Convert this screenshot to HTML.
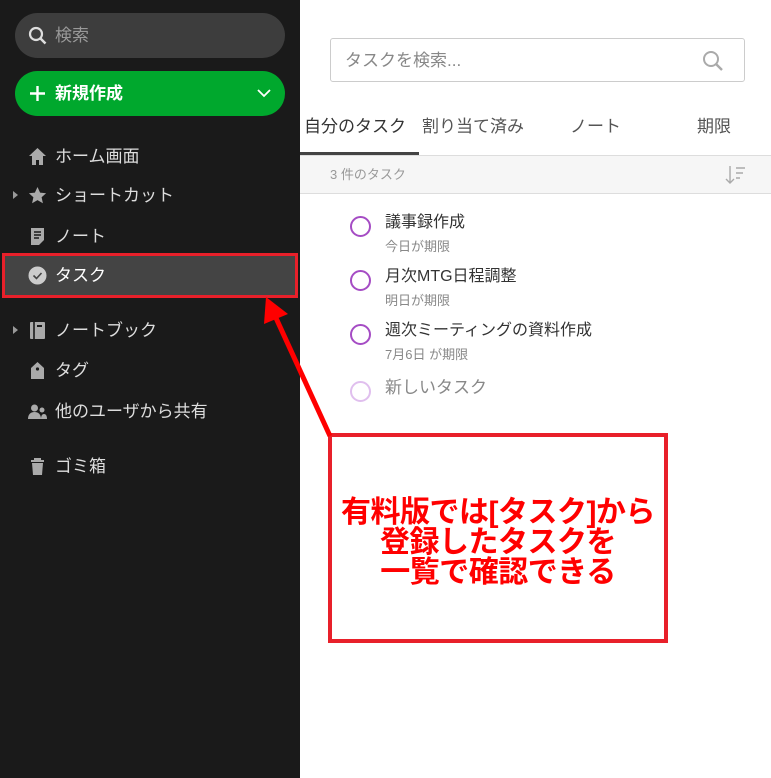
<!DOCTYPE html>
<html><head><meta charset="utf-8"><style>
*{margin:0;padding:0;box-sizing:border-box}
body{width:771px;height:778px;overflow:hidden;background:#fff;font-family:"Liberation Sans","Noto Sans CJK JP",sans-serif;position:relative}
.sb{position:absolute;left:0;top:0;width:300px;height:778px;background:#1a1a1a}
.search{position:absolute;left:15px;top:13px;width:270px;height:45px;border-radius:23px;background:#3d3d3d;color:#999;font-size:17px;line-height:45px;padding-left:40px}
.new{position:absolute;left:15px;top:71px;width:270px;height:45px;border-radius:23px;background:#00a82d;color:#fff;font-size:17px;font-weight:bold;line-height:45px;padding-left:40px}
.item{position:absolute;left:0;width:300px;height:40px;color:#ddd;font-size:17px;line-height:42px;padding-left:55px}
.ic{position:absolute;left:28px;top:11px;width:19px;height:19px}
.tri{position:absolute;left:13px;top:16px;width:0;height:0;border-left:5px solid #999;border-top:4px solid transparent;border-bottom:4px solid transparent}
.sel{position:absolute;left:2px;top:253px;width:296px;height:45px;background:#444;border:3px solid #e8202a}
.main{position:absolute;left:300px;top:0;width:471px;height:778px}
.ts{position:absolute;left:30px;top:38px;width:415px;height:44px;border:1px solid #ccc;border-radius:3px;color:#888;font-size:17px;line-height:44px;padding-left:14px}
.tab{position:absolute;top:112px;font-size:17px;color:#555}
.bar{position:absolute;left:0;top:155px;width:471px;height:39px;background:#f6f6f6;border-top:1px solid #ddd;border-bottom:1px solid #ddd;color:#999;font-size:13px;line-height:37px;padding-left:30px}
.task{position:absolute;left:50px}
.circ{position:absolute;left:0;top:4px;width:21px;height:21px;border:2px solid #a54cc4;border-radius:50%}
.tt{position:absolute;left:35px;top:0;font-size:16px;color:#333;white-space:nowrap;line-height:22px}
.st{position:absolute;left:35px;top:24px;font-size:13px;color:#888;white-space:nowrap}
.note{position:absolute;left:328px;top:433px;width:340px;height:210px;border:4px solid #e8202a;background:#fff;color:#f00;font-size:30px;font-weight:bold;text-align:center;padding-top:61px;line-height:30px;white-space:nowrap;letter-spacing:-0.5px}
</style></head><body>
<div class="sb">
 <div class="search"><svg style="position:absolute;left:13px;top:13px" width="20" height="20" viewBox="0 0 20 20"><circle cx="8" cy="8" r="6" fill="none" stroke="#ddd" stroke-width="2.2"/><path d="M12.5 12.5l5 5" stroke="#ddd" stroke-width="2.5"/></svg>検索</div>
 <div class="new"><svg style="position:absolute;left:14px;top:14px" width="17" height="17"><path d="M8.5 1v15M1 8.5h15" stroke="#fff" stroke-width="2.4"/></svg>新規作成<svg style="position:absolute;right:14px;top:18px" width="14" height="9"><path d="M1 1l6 6 6-6" stroke="#fff" stroke-width="1.8" fill="none"/></svg></div>
 <div class="item" style="top:136px"><svg class="ic" viewBox="0 0 19 19"><path d="M9.5 1L1 9h3v9h4v-5h3v5h4V9h3z" fill="#aaa"/></svg>ホーム画面</div>
 <div class="item" style="top:175px"><div class="tri"></div><svg class="ic" viewBox="0 0 19 19"><path d="M9.5 1l2.6 5.6 6 .6-4.5 4 1.3 6-5.4-3.1-5.4 3.1 1.3-6-4.5-4 6-.6z" fill="#aaa"/></svg>ショートカット</div>
 <div class="item" style="top:216px"><svg class="ic" viewBox="0 0 19 19"><path d="M3 1h13v12l-5 5H3z" fill="#aaa"/><path d="M6 5h7M6 8h7M6 11h5" stroke="#1a1a1a" stroke-width="1.5"/></svg>ノート</div>
 <div class="sel"></div>
 <div class="item" style="top:255px;color:#fff"><svg class="ic" viewBox="0 0 19 19"><circle cx="9.5" cy="9.5" r="9" fill="#ccc"/><path d="M5.5 9.5l3 3 5-5.5" stroke="#444" stroke-width="1.6" fill="none"/></svg>タスク</div>
 <div class="item" style="top:310px"><div class="tri"></div><svg class="ic" viewBox="0 0 19 19"><rect x="2" y="1" width="15" height="17" rx="1" fill="#aaa"/><path d="M6 1v17" stroke="#1a1a1a" stroke-width="1.6"/><rect x="9" y="4" width="5" height="2" fill="#1a1a1a"/></svg>ノートブック</div>
 <div class="item" style="top:350px"><svg class="ic" viewBox="0 0 19 19"><path d="M9.5 1L3 7v11h13V7z" fill="#aaa"/><circle cx="9.5" cy="8" r="1.6" fill="#1a1a1a"/></svg>タグ</div>
 <div class="item" style="top:391px"><svg class="ic" viewBox="0 0 19 19"><circle cx="6.5" cy="6" r="3.5" fill="#aaa"/><path d="M0 17c0-5 3-7 6.5-7s6.5 2 6.5 7z" fill="#aaa"/><circle cx="14" cy="8" r="2.5" fill="#aaa"/><path d="M13 17c0-3 1-5 3-5s3 2 3 5z" fill="#aaa"/></svg>他のユーザから共有</div>
 <div class="item" style="top:446px"><svg class="ic" viewBox="0 0 19 19"><path d="M3 4h13M7 4V2h5v2" stroke="#aaa" stroke-width="2" fill="none"/><path d="M4 6h11l-1 12H5z" fill="#aaa"/></svg>ゴミ箱</div>
</div>
<div class="main">
 <div class="ts">タスクを検索...<svg style="position:absolute;right:20px;top:11px" width="22" height="22" viewBox="0 0 22 22"><circle cx="9" cy="9" r="7" fill="none" stroke="#aaa" stroke-width="2"/><path d="M14 14l6 6" stroke="#aaa" stroke-width="2.4"/></svg></div>
 <div class="tab" style="left:4px;color:#333">自分のタスク</div>
 <div class="tab" style="left:122px">割り当て済み</div>
 <div class="tab" style="left:270px">ノート</div>
 <div class="tab" style="left:397px">期限</div>
 <div style="position:absolute;left:0;top:152px;width:119px;height:3px;background:#444"></div>
 <div class="bar">3 件のタスク<svg style="position:absolute;right:24px;top:9px" width="22" height="20"><path d="M5 1v17M1 14l4 4 4-4" stroke="#aaa" stroke-width="1.4" fill="none"/><path d="M11 3h9M11 8h7M11 13h4" stroke="#aaa" stroke-width="1.4"/></svg></div>
 <div class="task" style="top:212px"><div class="circ"></div><div class="tt">議事録作成</div><div class="st">今日が期限</div></div>
 <div class="task" style="top:266px"><div class="circ"></div><div class="tt">月次MTG日程調整</div><div class="st">明日が期限</div></div>
 <div class="task" style="top:320px"><div class="circ"></div><div class="tt">週次ミーティングの資料作成</div><div class="st">7月6日 が期限</div></div>
 <div class="task" style="top:377px"><div class="circ" style="border-color:#e0bfee"></div><div class="tt" style="color:#888;font-size:17px">新しいタスク</div></div>
</div>
<div class="note">有料版では[タスク]から<br>登録したタスクを<br>一覧で確認できる</div>
<svg style="position:absolute;left:0;top:0" width="771" height="778"><path d="M330 436L276 318" stroke="#f00" stroke-width="5"/><path d="M266 297l-2 27 24-10z" fill="#f00"/></svg>
</body></html>
